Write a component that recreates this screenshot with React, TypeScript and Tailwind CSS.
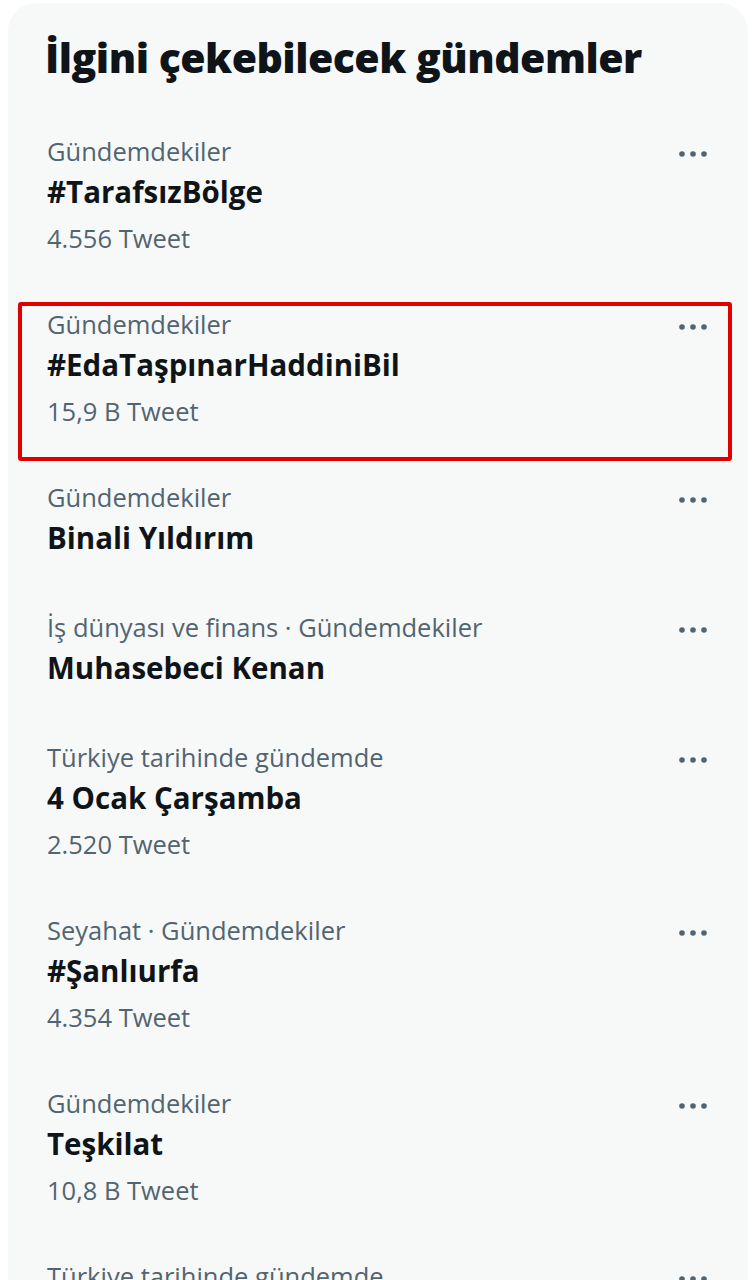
const trends = [
  { category: "Gündemdekiler", title: "#TarafsızBölge", count: "4.556 Tweet" },
  { category: "Gündemdekiler", title: "#EdaTaşpınarHaddiniBil", count: "15,9 B Tweet", marked: true },
  { category: "Gündemdekiler", title: "Binali Yıldırım" },
  { category: "İş dünyası ve finans · Gündemdekiler", title: "Muhasebeci Kenan" },
  { category: "Türkiye tarihinde gündemde", title: "4 Ocak Çarşamba", count: "2.520 Tweet" },
  { category: "Seyahat · Gündemdekiler", title: "#Şanlıurfa", count: "4.354 Tweet" },
  { category: "Gündemdekiler", title: "Teşkilat", count: "10,8 B Tweet" },
  { category: "Türkiye tarihinde gündemde", title: "3 Ocak Salı", count: "1.204 Tweet" },
];

function Dots() {
  return (
    <svg width="28" height="8" viewBox="0 0 28 8" className="fill-[#536471]">
      <circle cx="3" cy="4" r="2.8" />
      <circle cx="14" cy="4" r="2.8" />
      <circle cx="25" cy="4" r="2.8" />
    </svg>
  );
}

export default function App() {
  return (
    <div
      className="w-[756px] h-[1280px] overflow-hidden bg-white pt-[3px] px-[8px] text-[#0f1419]"
      style={{ fontFamily: '"Open Sans", "Noto Sans", sans-serif' }}
    >
      <div className="rounded-[28px] bg-[#f7f9f9] pt-[29px] min-h-[1400px]">
        <h2 className="px-[37px] text-[41px] leading-[50px] font-extrabold tracking-[-0.5px]">
          İlgini çekebilecek gündemler
        </h2>
        <div className="mt-[29px]">
          {trends.map((t) => (
            <div key={t.title} className="relative flex justify-between pl-[39px] pr-[41px] pt-[24px] pb-[24px]">
              {t.marked && (
                <div className="absolute left-[10px] right-[16px] top-[18px] bottom-[-4px] border-[4px] border-[#e00000] rounded-[3px]" />
              )}
              <div className="flex flex-col">
                <span className="text-[25.5px] leading-[32px] text-[#536471]">{t.category}</span>
                <span className="text-[29.5px] leading-[50px] font-bold">{t.title}</span>
                {t.count && (
                  <span className="text-[25.5px] leading-[43px] text-[#536471]">{t.count}</span>
                )}
              </div>
              <div className="pt-[15px]">
                <Dots />
              </div>
            </div>
          ))}
        </div>
      </div>
    </div>
  );
}
